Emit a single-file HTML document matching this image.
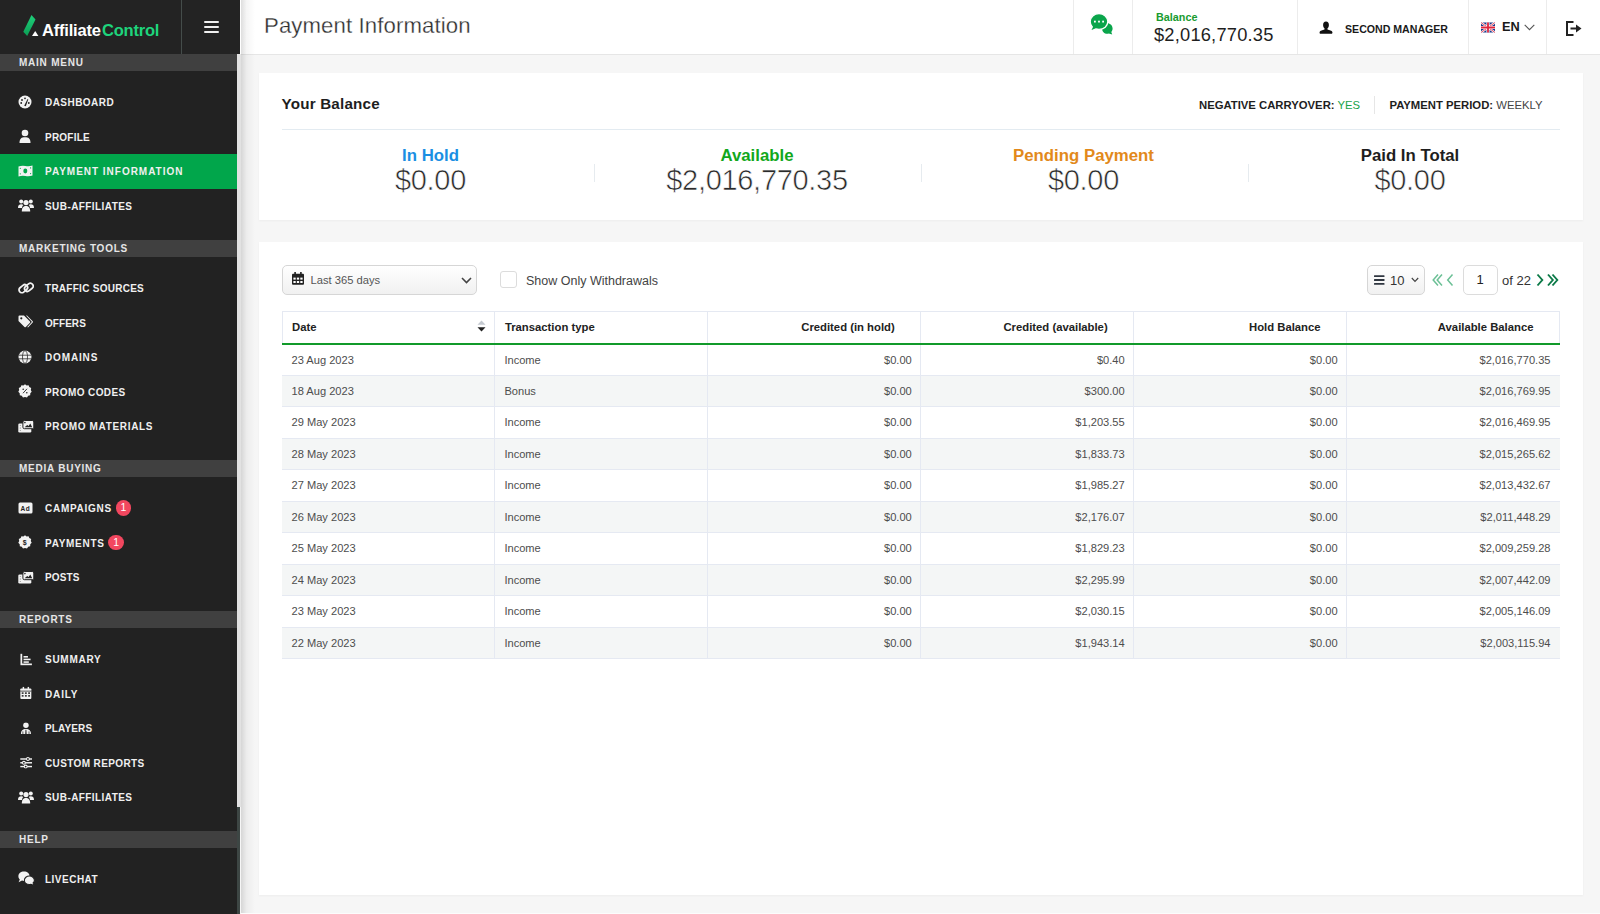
<!DOCTYPE html>
<html><head><meta charset="utf-8"><title>Payment Information</title>
<style>
*{box-sizing:border-box;margin:0;padding:0}
html,body{width:1600px;height:914px;overflow:hidden;background:#f6f6f6;font-family:"Liberation Sans",sans-serif}
#side{position:absolute;left:0;top:0;width:237px;height:914px;background:#222}
#sidehead{position:absolute;left:0;top:0;width:240px;height:54px;background:#232323}
#divider{position:absolute;left:181px;top:0;width:1px;height:54px;background:#444c4a}
.burger{position:absolute;left:204px;width:15px;height:2px;background:#f0f0f0;border-radius:1px}
#logo{position:absolute;left:23px;top:14px;width:140px;height:24px}
.logotxt{position:absolute;top:20px;font-weight:bold;font-size:16.5px;letter-spacing:-0.2px;line-height:20px}
#scroll{position:absolute;left:237px;top:54px;width:4px;height:753px;background:#e2e2e2}
#track{position:absolute;left:237px;top:807px;width:3px;height:107px;background:#3d4644}
#shadow{position:absolute;left:241px;top:0;width:14px;height:914px;background:linear-gradient(to right,rgba(0,0,0,0.13),rgba(0,0,0,0.04) 40%,rgba(0,0,0,0))}
.sbar{position:absolute;left:0;width:237px;height:17px;background:#404040;color:#e6e6e6;font-weight:bold;font-size:10px;letter-spacing:0.76px;line-height:17px;padding-left:19px}
.item{position:absolute;left:0;width:237px;height:34.5px;color:#f0f0f0;font-weight:bold;font-size:10px;letter-spacing:0.7px;line-height:34.5px}
.item.active{background:#01a64b;height:35px}
.item .ic{position:absolute;left:18px;top:0;height:34.5px;width:17px;display:flex;align-items:center}
.item .ic svg{display:block}
.item .lbl{position:absolute;left:45px;top:1.5px}
.nbadge{position:relative;display:inline-block;vertical-align:top;margin-top:8px;margin-left:3.8px;width:15.5px;height:15.5px;border-radius:50%;background:#f2475f;color:#fff;font-size:10.5px;line-height:15px;text-align:center;letter-spacing:0;font-weight:normal}
#top{position:absolute;left:240px;top:0;width:1360px;height:55px;background:#fff;border-bottom:1px solid #e6e6e6}
#title{position:absolute;left:264px;top:12px;font-size:22.2px;color:#2e2e2e;line-height:28px;letter-spacing:0.1px;-webkit-text-stroke:0.3px #fff}
.sep{position:absolute;top:0;width:1px;height:54px;background:#ececec}
.card{position:absolute;left:259px;width:1323.5px;background:#fff;box-shadow:0 1px 2px rgba(0,0,0,0.04)}
.stat{position:absolute;top:144.5px;width:326.5px;text-align:center}
.stat .lab{font-weight:bold;font-size:16.8px;line-height:22px;height:22px}
.stat .val{font-size:29px;line-height:27px;color:#2a2a2a;letter-spacing:-0.3px;-webkit-text-stroke:0.6px #fff}
.vdiv{position:absolute;top:164px;width:1px;height:18px;background:#e6ebef}
#tbl{position:absolute;left:282px;top:311px;width:1277.5px;height:347.5px;border:1px solid #e5e9f2;border-bottom:none}
.th{position:absolute;top:0;height:31px;font-weight:bold;font-size:11.3px;color:#222;line-height:30px}
.th.l{padding-left:10px}.th.r{padding-right:26px;text-align:right}
.sort{position:absolute;right:8.5px;top:7.5px}
#green{position:absolute;left:-1px;top:31px;width:1277.5px;height:2px;background:#119a2a;z-index:2}
.tr{position:absolute;left:-1px;width:1277.5px;height:31.3px;border-bottom:1px solid #e5e9f2;background:#fff}
.tr.odd{background:#f4f6f6}
.td{position:absolute;top:0;height:31px;font-size:11.1px;color:#4d4d4d;line-height:31px}
.td.l{padding-left:9.5px}.td.r{padding-right:9px;text-align:right}
.vl{position:absolute;top:0;width:1px;height:347px;background:#e5e9f2}
.btn{position:absolute;border:1px solid #d6d6d6;border-radius:5px;background:linear-gradient(#fff,#f1f1f1)}
</style></head><body>
<div id="side">
<div class="sbar" style="top:54px">MAIN MENU</div>
<div class="item" style="top:84.7px"><span class="ic" style=""><svg width="14" height="14" viewBox="0 0 14 14"><circle cx="7" cy="7" r="6.5" fill="#f2f2f2"/><circle cx="4" cy="5" r="0.9" fill="#222"/><circle cx="7" cy="3.3" r="0.9" fill="#222"/><circle cx="3.2" cy="8" r="0.9" fill="#222"/><circle cx="10.8" cy="8" r="0.9" fill="#222"/><path d="M6.2 10.8 L9.6 3.9 L10.3 4.2 L7.8 11.3 Z" fill="#222"/></svg></span><span class="lbl" style="letter-spacing:0.45px">DASHBOARD</span></div>
<div class="item" style="top:119.2px"><span class="ic" style=""><svg width="14" height="14" viewBox="0 0 14 14"><circle cx="7" cy="4" r="3.3" fill="#f2f2f2"/><path d="M1.5 14 C1.5 9.5 3.5 8.3 7 8.3 C10.5 8.3 12.5 9.5 12.5 14 Z" fill="#f2f2f2"/></svg></span><span class="lbl" style="letter-spacing:0.217px">PROFILE</span></div>
<div class="item active" style="top:153.7px"><span class="ic" style=""><svg width="15" height="12" viewBox="0 0 15 12"><path d="M0.5 1.5 Q4 0.2 7.5 1 Q11 1.8 14.5 0.5 L14.5 10.5 Q11 11.8 7.5 11 Q4 10.2 0.5 11.5 Z" fill="#f2f2f2"/><ellipse cx="7.3" cy="6" rx="2" ry="2.4" fill="#01a64b"/><circle cx="2.3" cy="3.3" r="0.6" fill="#01a64b"/><circle cx="12.6" cy="2.9" r="0.6" fill="#01a64b"/><circle cx="2.3" cy="8.8" r="0.6" fill="#01a64b"/><circle cx="12.6" cy="8.6" r="0.6" fill="#01a64b"/></svg></span><span class="lbl" style="letter-spacing:0.978px">PAYMENT INFORMATION</span></div>
<div class="item" style="top:188.2px"><span class="ic" style=""><svg width="16" height="14" viewBox="0 0 16 14"><circle cx="3.2" cy="3.6" r="2" fill="#f2f2f2"/><circle cx="12.8" cy="3.6" r="2" fill="#f2f2f2"/><circle cx="8" cy="4.6" r="2.6" fill="#f2f2f2"/><path d="M0 10 C0 7 1.5 6.3 3.2 6.3 C4.3 6.3 5 6.6 5.3 7 C4.3 7.8 4 9 4 10 Z" fill="#f2f2f2"/><path d="M16 10 C16 7 14.5 6.3 12.8 6.3 C11.7 6.3 11 6.6 10.7 7 C11.7 7.8 12 9 12 10 Z" fill="#f2f2f2"/><path d="M3.8 13.5 C3.8 9.6 5.5 8 8 8 C10.5 8 12.2 9.6 12.2 13.5 Z" fill="#f2f2f2"/></svg></span><span class="lbl" style="letter-spacing:0.423px">SUB-AFFILIATES</span></div>
<div class="sbar" style="top:240px">MARKETING TOOLS</div>
<div class="item" style="top:270.7px"><span class="ic" style=""><svg width="16" height="14" viewBox="0 0 16 14"><g fill="none" stroke="#f2f2f2" stroke-width="1.8"><rect x="0.6" y="4.9" width="9.4" height="5.6" rx="2.8" transform="rotate(-40 5.3 7.7)"/><rect x="6.2" y="3.5" width="9.4" height="5.6" rx="2.8" transform="rotate(-40 10.9 6.3)"/></g></svg></span><span class="lbl" style="letter-spacing:0.271px">TRAFFIC SOURCES</span></div>
<div class="item" style="top:305.2px"><span class="ic" style=""><svg width="15" height="14" viewBox="0 0 15 14"><path d="M0.5 1.5 Q0.5 0.5 1.5 0.5 L6 0.5 L12 6.5 Q12.6 7.2 12 7.8 L7.8 12 Q7.2 12.6 6.5 12 L0.5 6 Z" fill="#f2f2f2"/><circle cx="3.3" cy="3.3" r="1.1" fill="#222"/><path d="M8 0.5 L9 0.5 L14.7 6.3 Q15.2 7 14.7 7.6 L10 12.5 L9.3 12 L13.6 7.3 Q13.9 7 13.6 6.6 Z" fill="#f2f2f2"/></svg></span><span class="lbl" style="letter-spacing:0.05px">OFFERS</span></div>
<div class="item" style="top:339.7px"><span class="ic" style=""><svg width="14" height="15" viewBox="0 0 14 15"><circle cx="7" cy="8" r="6.5" fill="#f2f2f2"/><g stroke="#222" stroke-width="0.75" fill="none"><ellipse cx="7" cy="8" rx="2.5" ry="6.4"/><path d="M0.5 6.2 H13.5 M0.5 9.8 H13.5"/></g></svg></span><span class="lbl" style="letter-spacing:0.85px">DOMAINS</span></div>
<div class="item" style="top:374.2px"><span class="ic" style=""><svg width="14" height="14" viewBox="0 0 14 14"><path d="M7 0.3 L8.6 1.5 L10.6 1.2 L11.3 3.1 L13.2 4 L12.8 6 L13.7 7.8 L12.3 9.3 L12.2 11.3 L10.2 11.8 L9 13.5 L7 13 L5 13.5 L3.8 11.8 L1.8 11.3 L1.7 9.3 L0.3 7.8 L1.2 6 L0.8 4 L2.7 3.1 L3.4 1.2 L5.4 1.5 Z" fill="#f2f2f2"/><g stroke="#222" stroke-width="0.9"><path d="M5 9.2 L9 4.8"/></g><circle cx="5.2" cy="5.2" r="0.8" fill="#222"/><circle cx="8.8" cy="8.8" r="0.8" fill="#222"/></svg></span><span class="lbl" style="letter-spacing:0.41px">PROMO CODES</span></div>
<div class="item" style="top:408.7px"><span class="ic" style=""><svg width="16" height="14" viewBox="0 0 16 14"><rect x="0.3" y="4.5" width="13" height="9" rx="1.3" fill="#f2f2f2"/><g fill="#222"><circle cx="2.2" cy="6.6" r="0.45"/><circle cx="2.2" cy="9" r="0.45"/><circle cx="2.2" cy="11.4" r="0.45"/></g><rect x="4.9" y="1.5" width="10.9" height="8.2" rx="1.5" fill="#f2f2f2" stroke="#222" stroke-width="1"/><path d="M6.6 8.3 L9.2 5.9 L10.6 6.9 L12.3 4.6 L14.2 8.3 Z" fill="#222"/><circle cx="6.9" cy="3.6" r="0.8" fill="#222"/></svg></span><span class="lbl" style="letter-spacing:0.671px">PROMO MATERIALS</span></div>
<div class="sbar" style="top:460px">MEDIA BUYING</div>
<div class="item" style="top:490.7px"><span class="ic" style=""><svg width="15" height="12" viewBox="0 0 15 12"><rect x="0.5" y="0.5" width="14" height="11" rx="1.5" fill="#f2f2f2"/><text x="7.5" y="8.6" font-family="Liberation Sans" font-weight="bold" font-size="6.5" text-anchor="middle" fill="#222">Ad</text></svg></span><span class="lbl" style="letter-spacing:0.725px">CAMPAIGNS<span class="nbadge">1</span></span></div>
<div class="item" style="top:525.2px"><span class="ic" style=""><svg width="14" height="14" viewBox="0 0 14 14"><path d="M7 0.3 L8.6 1.5 L10.6 1.2 L11.3 3.1 L13.2 4 L12.8 6 L13.7 7.8 L12.3 9.3 L12.2 11.3 L10.2 11.8 L9 13.5 L7 13 L5 13.5 L3.8 11.8 L1.8 11.3 L1.7 9.3 L0.3 7.8 L1.2 6 L0.8 4 L2.7 3.1 L3.4 1.2 L5.4 1.5 Z" fill="#f2f2f2"/><text x="7" y="9.6" font-family="Liberation Sans" font-weight="bold" font-size="7" text-anchor="middle" fill="#222">$</text></svg></span><span class="lbl" style="letter-spacing:0.714px">PAYMENTS<span class="nbadge">1</span></span></div>
<div class="item" style="top:559.7px"><span class="ic" style=""><svg width="16" height="14" viewBox="0 0 16 14"><rect x="0.3" y="4.5" width="13" height="9" rx="1.3" fill="#f2f2f2"/><g fill="#222"><circle cx="2.2" cy="6.6" r="0.45"/><circle cx="2.2" cy="9" r="0.45"/><circle cx="2.2" cy="11.4" r="0.45"/></g><rect x="4.9" y="1.5" width="10.9" height="8.2" rx="1.5" fill="#f2f2f2" stroke="#222" stroke-width="1"/><path d="M6.6 8.3 L9.2 5.9 L10.6 6.9 L12.3 4.6 L14.2 8.3 Z" fill="#222"/><circle cx="6.9" cy="3.6" r="0.8" fill="#222"/></svg></span><span class="lbl" style="letter-spacing:0.1px">POSTS</span></div>
<div class="sbar" style="top:611px">REPORTS</div>
<div class="item" style="top:641.7px"><span class="ic" style="transform:translate(1px,0.5px) scale(0.88)"><svg width="14" height="14" viewBox="0 0 14 14"><path d="M0.5 0.5 H2.5 V11.5 H13.5 V13.5 H0.5 Z" fill="#f2f2f2"/><rect x="4" y="3" width="5" height="1.8" fill="#f2f2f2"/><rect x="4" y="6" width="8" height="1.8" fill="#f2f2f2"/><rect x="4" y="9" width="6" height="1.8" fill="#f2f2f2"/></svg></span><span class="lbl" style="letter-spacing:0.733px">SUMMARY</span></div>
<div class="item" style="top:676.2px"><span class="ic" style="transform:translate(1.2px,0px) scale(0.92)"><svg width="13" height="14" viewBox="0 0 13 14"><rect x="0.5" y="2" width="12" height="11.5" rx="1" fill="#f2f2f2"/><rect x="3" y="0.3" width="1.6" height="3" fill="#f2f2f2"/><rect x="8.4" y="0.3" width="1.6" height="3" fill="#f2f2f2"/><g fill="#222"><rect x="0.5" y="4.5" width="12" height="0.8"/><rect x="2" y="6.3" width="2" height="1.6"/><rect x="5.5" y="6.3" width="2" height="1.6"/><rect x="9" y="6.3" width="2" height="1.6"/><rect x="2" y="9.3" width="2" height="1.6"/><rect x="5.5" y="9.3" width="2" height="1.6"/><rect x="9" y="9.3" width="2" height="1.6"/></g></svg></span><span class="lbl" style="letter-spacing:0.85px">DAILY</span></div>
<div class="item" style="top:710.7px"><span class="ic" style="transform:translate(1.2px,0.3px) scale(0.88)"><svg width="13" height="14" viewBox="0 0 13 14"><circle cx="6.5" cy="3.6" r="3.1" fill="#f2f2f2"/><path d="M0.8 13.5 C0.8 9.5 2.8 7.8 6.5 7.8 C10.2 7.8 12.2 9.5 12.2 13.5 Z" fill="#f2f2f2"/><path d="M6 8.5 L7 8.5 L7.3 13.5 L5.7 13.5 Z" fill="#222"/><path d="M3 10.5 V13.5 M10 10.5 V13.5" stroke="#222" stroke-width="0.8"/></svg></span><span class="lbl" style="letter-spacing:0.133px">PLAYERS</span></div>
<div class="item" style="top:745.2px"><span class="ic" style="transform:translate(1px,0.3px) scale(0.9)"><svg width="14" height="13" viewBox="0 0 14 13"><g fill="#f2f2f2"><rect x="0.5" y="1.5" width="13" height="1.6"/><rect x="0.5" y="5.7" width="13" height="1.6"/><rect x="0.5" y="9.9" width="13" height="1.6"/></g><g fill="#222" stroke="#f2f2f2" stroke-width="1.2"><circle cx="9" cy="2.3" r="1.6"/><circle cx="4.5" cy="6.5" r="1.6"/><circle cx="6.5" cy="10.7" r="1.6"/></g></svg></span><span class="lbl" style="letter-spacing:0.385px">CUSTOM REPORTS</span></div>
<div class="item" style="top:779.7px"><span class="ic" style=""><svg width="16" height="14" viewBox="0 0 16 14"><circle cx="3.2" cy="3.6" r="2" fill="#f2f2f2"/><circle cx="12.8" cy="3.6" r="2" fill="#f2f2f2"/><circle cx="8" cy="4.6" r="2.6" fill="#f2f2f2"/><path d="M0 10 C0 7 1.5 6.3 3.2 6.3 C4.3 6.3 5 6.6 5.3 7 C4.3 7.8 4 9 4 10 Z" fill="#f2f2f2"/><path d="M16 10 C16 7 14.5 6.3 12.8 6.3 C11.7 6.3 11 6.6 10.7 7 C11.7 7.8 12 9 12 10 Z" fill="#f2f2f2"/><path d="M3.8 13.5 C3.8 9.6 5.5 8 8 8 C10.5 8 12.2 9.6 12.2 13.5 Z" fill="#f2f2f2"/></svg></span><span class="lbl" style="letter-spacing:0.423px">SUB-AFFILIATES</span></div>
<div class="sbar" style="top:831px">HELP</div>
<div class="item" style="top:861.7px"><span class="ic" style=""><svg width="17" height="15" viewBox="0 0 17 15"><path d="M6 0.5 C9.2 0.5 11.6 2.6 11.6 5.2 C11.6 7.8 9.2 9.9 6 9.9 C5.3 9.9 4.6 9.8 4 9.6 L0.6 11.2 L1.8 8.4 C0.9 7.6 0.4 6.5 0.4 5.2 C0.4 2.6 2.8 0.5 6 0.5 Z" fill="#f2f2f2"/><path d="M11.4 5 C14.2 5 16.4 6.9 16.4 9.2 C16.4 10.3 15.9 11.3 15.1 12 L16.2 14.6 L12.9 13.3 C12.4 13.4 11.9 13.5 11.4 13.5 C8.6 13.5 6.4 11.6 6.4 9.2 C6.4 6.9 8.6 5 11.4 5 Z" fill="#f2f2f2" stroke="#222" stroke-width="1.1"/></svg></span><span class="lbl" style="letter-spacing:0.486px">LIVECHAT</span></div>
</div>
<div id="sidehead">
  <svg style="position:absolute;left:23px;top:15px" width="16" height="22" viewBox="0 0 16 22"><defs><linearGradient id="lg" x1="0" y1="0" x2="0" y2="1"><stop offset="0" stop-color="#1fd07a"/><stop offset="1" stop-color="#0b9e55"/></linearGradient></defs><path d="M8.5 0 L12.5 4.5 L4.2 21 L0.3 16.7 Z" fill="url(#lg)"/><path d="M12.2 16 L15.4 21 H9 Z" fill="#fff"/></svg>
  <span class="logotxt" style="left:42px;color:#fff">Affiliate</span>
  <span class="logotxt" style="left:102px;color:#1ed47c">Control</span>
  <div id="divider"></div>
  <div class="burger" style="top:20.5px"></div>
  <div class="burger" style="top:26px"></div>
  <div class="burger" style="top:31px"></div>
</div>
<div id="scroll"></div><div id="track"></div>
<div id="top">
</div>
<div id="shadow"></div>
<div style="position:absolute;left:241px;top:913px;width:1359px;height:1px;background:#fcfcfc"></div>
<div id="title">Payment Information</div>
<div class="sep" style="left:1073px"></div>
<div class="sep" style="left:1132px"></div>
<div class="sep" style="left:1297px"></div>
<div class="sep" style="left:1468px"></div>
<div class="sep" style="left:1546px"></div>
<!-- chat icon -->
<svg style="position:absolute;left:1089px;top:13px" width="24" height="22" viewBox="0 0 24 22"><path d="M18.3 10.3 C21.3 10.3 23.6 12.6 23.6 15.5 C23.6 16.8 23.1 18 22.3 18.9 L23.2 21.6 L19.8 20.6 C19.3 20.7 18.8 20.8 18.3 20.8 C15.3 20.8 13 18.4 13 15.5 C13 12.6 15.3 10.3 18.3 10.3 Z" fill="#0aa54b"/><path d="M10 0.6 C14.9 0.6 18.8 4.2 18.8 8.6 C18.8 13 14.9 16.4 10 16.4 C8.9 16.4 7.8 16.2 6.8 15.9 L1.2 18.3 L3.3 14 C1.9 12.6 1.2 10.7 1.2 8.6 C1.2 4.2 5.1 0.6 10 0.6 Z" fill="#0aa54b" stroke="#fff" stroke-width="1.3"/><rect x="5" y="7.7" width="1.8" height="1.8" fill="#fff"/><rect x="9.1" y="7.7" width="1.8" height="1.8" fill="#fff"/><rect x="13.2" y="7.7" width="1.8" height="1.8" fill="#fff"/></svg>
<div style="position:absolute;left:1156px;top:10px;font-weight:bold;font-size:10.8px;color:#189b2f;line-height:14px">Balance</div>
<div style="position:absolute;left:1154px;top:24px;font-size:18.3px;color:#1f1f1f;line-height:22px;letter-spacing:0.2px">$2,016,770.35</div>
<svg style="position:absolute;left:1319px;top:21px" width="14" height="14" viewBox="0 0 14 14"><path d="M7 0.6 C8.9 0.6 9.9 2 9.9 4 C9.9 5.6 9.1 7 8.4 7.6 L8.5 8.6 C10.4 9.2 12.9 9.6 13.4 11 C13.6 11.8 13.2 12.8 12.6 12.8 L1.4 12.8 C0.8 12.8 0.4 11.8 0.6 11 C1.1 9.6 3.6 9.2 5.5 8.6 L5.6 7.6 C4.9 7 4.1 5.6 4.1 4 C4.1 2 5.1 0.6 7 0.6 Z" fill="#111"/></svg>
<div style="position:absolute;left:1345px;top:22px;font-weight:bold;font-size:10.6px;color:#1a1a1a;line-height:14px;letter-spacing:0px">SECOND MANAGER</div>
<svg style="position:absolute;left:1481px;top:22px" width="14" height="11" viewBox="0 0 14 11"><rect x="0" y="0.5" width="14" height="10" rx="1" fill="#1b3a8c"/><path d="M0 0.5 L14 10.5 M14 0.5 L0 10.5" stroke="#fff" stroke-width="2.2"/><path d="M0 0.5 L14 10.5 M14 0.5 L0 10.5" stroke="#e0243c" stroke-width="0.8"/><path d="M7 0.5 V10.5 M0 5.5 H14" stroke="#fff" stroke-width="3.2"/><path d="M7 0.5 V10.5 M0 5.5 H14" stroke="#e0243c" stroke-width="1.8"/></svg>
<div style="position:absolute;left:1502px;top:20px;font-weight:bold;font-size:12.8px;color:#1a1a1a;line-height:14px">EN</div>
<svg style="position:absolute;left:1524px;top:24px" width="11" height="7" viewBox="0 0 11 7"><path d="M0.7 0.8 L5.5 5.6 L10.3 0.8" fill="none" stroke="#555" stroke-width="1.1"/></svg>
<svg style="position:absolute;left:1566px;top:21px" width="16" height="15" viewBox="0 0 16 15"><path d="M7.5 1 H1 V14 H7.5" fill="none" stroke="#222" stroke-width="2"/><path d="M4.5 6.4 H10 V3.5 L15.5 7.5 L10 11.5 V8.6 H4.5 Z" fill="#222"/></svg>

<!-- card 1 -->
<div class="card" style="top:73px;height:147px"></div>
<div style="position:absolute;left:281.5px;top:95px;font-weight:bold;font-size:15.2px;color:#1e1e1e;line-height:18px;letter-spacing:0.2px">Your Balance</div>
<div style="position:absolute;left:1199px;top:98px;font-size:11.3px;line-height:15px;color:#1e1e1e;white-space:nowrap"><b>NEGATIVE CARRYOVER:</b> <span style="color:#1aa34a">YES</span></div>
<div style="position:absolute;left:1373.5px;top:95.5px;width:1px;height:18px;background:#e6e6e6"></div>
<div style="position:absolute;left:1389.5px;top:98px;font-size:11.3px;line-height:15px;color:#1e1e1e;white-space:nowrap"><b>PAYMENT PERIOD:</b> <span style="color:#444">WEEKLY</span></div>
<div style="position:absolute;left:281.5px;top:128.5px;width:1278.5px;height:1px;background:#e3ebf1"></div>
<div class="stat" style="left:267.25px"><div class="lab" style="color:#1b8fe3">In Hold</div><div class="val">$0.00</div></div>
<div class="stat" style="left:593.75px"><div class="lab" style="color:#12a81c">Available</div><div class="val">$2,016,770.35</div></div>
<div class="stat" style="left:920.25px"><div class="lab" style="color:#e2891b">Pending Payment</div><div class="val">$0.00</div></div>
<div class="stat" style="left:1246.75px"><div class="lab" style="color:#1e1e1e">Paid In Total</div><div class="val">$0.00</div></div>
<div class="vdiv" style="left:594px"></div>
<div class="vdiv" style="left:921px"></div>
<div class="vdiv" style="left:1247.5px"></div>

<!-- card 2 -->
<div class="card" style="top:242px;height:653px"></div>
<div class="btn" style="left:282px;top:265px;width:195px;height:30px"></div>
<svg style="position:absolute;left:292px;top:272px" width="12" height="13" viewBox="0 0 12 13"><rect x="0" y="1.8" width="12" height="11" rx="1" fill="#222"/><rect x="2.3" y="0" width="1.6" height="3" fill="#222"/><rect x="8.1" y="0" width="1.6" height="3" fill="#222"/><g fill="#fff"><rect x="1.4" y="5.6" width="2.3" height="2"/><rect x="4.85" y="5.6" width="2.3" height="2"/><rect x="8.3" y="5.6" width="2.3" height="2"/><rect x="1.4" y="9" width="2.3" height="2"/><rect x="4.85" y="9" width="2.3" height="2"/><rect x="8.3" y="9" width="2.3" height="2"/></g></svg>
<div style="position:absolute;left:310.5px;top:273px;font-size:11.2px;color:#555;line-height:14px">Last 365 days</div>
<svg style="position:absolute;left:461px;top:277px" width="11" height="7" viewBox="0 0 11 7"><path d="M1 1 L5.5 5.5 L10 1" fill="none" stroke="#444" stroke-width="1.6"/></svg>
<div style="position:absolute;left:500px;top:271px;width:16.5px;height:16.5px;border:1.3px solid #dcdcdc;border-radius:3px;background:#fff"></div>
<div style="position:absolute;left:526px;top:274px;font-size:12.5px;color:#444;line-height:14px">Show Only Withdrawals</div>
<div class="btn" style="left:1366.5px;top:265px;width:58px;height:30px"></div>
<svg style="position:absolute;left:1373.5px;top:275px" width="11" height="10" viewBox="0 0 11 10"><rect x="0" y="0.3" width="10.5" height="1.8" rx="0.5" fill="#2f3640"/><rect x="0" y="4.1" width="10.5" height="1.8" rx="0.5" fill="#2f3640"/><rect x="0" y="7.9" width="10.5" height="1.8" rx="0.5" fill="#2f3640"/></svg>
<div style="position:absolute;left:1390px;top:273px;font-size:13px;color:#333;line-height:15px">10</div>
<svg style="position:absolute;left:1411px;top:277px" width="8" height="6" viewBox="0 0 8 6"><path d="M0.8 1 L4 4.3 L7.2 1" fill="none" stroke="#444" stroke-width="1.2"/></svg>
<svg style="position:absolute;left:1432px;top:273px" width="22" height="14" viewBox="0 0 22 14"><g fill="none" stroke="#6cc096" stroke-width="1.5"><path d="M6 1.5 L1.2 7 L6 12.5"/><path d="M10 1.5 L5.2 7 L10 12.5"/><path d="M20.5 1.5 L15.7 7 L20.5 12.5"/></g></svg>
<div style="position:absolute;left:1462.5px;top:265px;width:35px;height:30px;border:1px solid #dcdcdc;border-radius:5px;background:#fff;text-align:center;font-size:13px;line-height:28px;color:#222">1</div>
<div style="position:absolute;left:1502px;top:273px;font-size:13px;color:#333;line-height:15px">of 22</div>
<svg style="position:absolute;left:1536px;top:273px" width="23" height="14" viewBox="0 0 23 14"><g fill="none" stroke="#0c7a48" stroke-width="1.9"><path d="M1.5 1.5 L6.3 7 L1.5 12.5"/><path d="M12 1.5 L16.8 7 L12 12.5"/><path d="M16.5 1.5 L21.3 7 L16.5 12.5"/></g></svg>

<div id="tbl">
<div class="th l" style="left:-1.00px;width:212.92px">Date<span class="sort"><svg style="display:block" width="9" height="12" viewBox="0 0 9 12"><path d="M4.5 0.5 L8.5 4.8 H0.5 Z" fill="#c4c9d0"/><path d="M4.5 11.5 L8.5 7.2 H0.5 Z" fill="#222"/></svg></span></div><div class="th l" style="left:211.92px;width:212.92px">Transaction type</div><div class="th r" style="left:424.83px;width:212.92px">Credited (in hold)</div><div class="th r" style="left:637.75px;width:212.92px">Credited (available)</div><div class="th r" style="left:850.67px;width:212.92px">Hold Balance</div><div class="th r" style="left:1063.58px;width:212.92px">Available Balance</div>
<div id="green"></div>
<div class="tr" style="top:33px;height:31px"><div class="td l" style="left:0.00px;width:212.92px;height:30px;line-height:30px">23 Aug 2023</div><div class="td l" style="left:212.92px;width:212.92px;height:30px;line-height:30px">Income</div><div class="td r" style="left:425.83px;width:212.92px;height:30px;line-height:30px">$0.00</div><div class="td r" style="left:638.75px;width:212.92px;height:30px;line-height:30px">$0.40</div><div class="td r" style="left:851.67px;width:212.92px;height:30px;line-height:30px">$0.00</div><div class="td r" style="left:1064.58px;width:212.92px;height:30px;line-height:30px">$2,016,770.35</div></div>
<div class="tr odd" style="top:64px;height:31px"><div class="td l" style="left:0.00px;width:212.92px;height:30px;line-height:30px">18 Aug 2023</div><div class="td l" style="left:212.92px;width:212.92px;height:30px;line-height:30px">Bonus</div><div class="td r" style="left:425.83px;width:212.92px;height:30px;line-height:30px">$0.00</div><div class="td r" style="left:638.75px;width:212.92px;height:30px;line-height:30px">$300.00</div><div class="td r" style="left:851.67px;width:212.92px;height:30px;line-height:30px">$0.00</div><div class="td r" style="left:1064.58px;width:212.92px;height:30px;line-height:30px">$2,016,769.95</div></div>
<div class="tr" style="top:95px;height:32px"><div class="td l" style="left:0.00px;width:212.92px;height:31px;line-height:31px">29 May 2023</div><div class="td l" style="left:212.92px;width:212.92px;height:31px;line-height:31px">Income</div><div class="td r" style="left:425.83px;width:212.92px;height:31px;line-height:31px">$0.00</div><div class="td r" style="left:638.75px;width:212.92px;height:31px;line-height:31px">$1,203.55</div><div class="td r" style="left:851.67px;width:212.92px;height:31px;line-height:31px">$0.00</div><div class="td r" style="left:1064.58px;width:212.92px;height:31px;line-height:31px">$2,016,469.95</div></div>
<div class="tr odd" style="top:127px;height:31px"><div class="td l" style="left:0.00px;width:212.92px;height:30px;line-height:30px">28 May 2023</div><div class="td l" style="left:212.92px;width:212.92px;height:30px;line-height:30px">Income</div><div class="td r" style="left:425.83px;width:212.92px;height:30px;line-height:30px">$0.00</div><div class="td r" style="left:638.75px;width:212.92px;height:30px;line-height:30px">$1,833.73</div><div class="td r" style="left:851.67px;width:212.92px;height:30px;line-height:30px">$0.00</div><div class="td r" style="left:1064.58px;width:212.92px;height:30px;line-height:30px">$2,015,265.62</div></div>
<div class="tr" style="top:158px;height:32px"><div class="td l" style="left:0.00px;width:212.92px;height:31px;line-height:31px">27 May 2023</div><div class="td l" style="left:212.92px;width:212.92px;height:31px;line-height:31px">Income</div><div class="td r" style="left:425.83px;width:212.92px;height:31px;line-height:31px">$0.00</div><div class="td r" style="left:638.75px;width:212.92px;height:31px;line-height:31px">$1,985.27</div><div class="td r" style="left:851.67px;width:212.92px;height:31px;line-height:31px">$0.00</div><div class="td r" style="left:1064.58px;width:212.92px;height:31px;line-height:31px">$2,013,432.67</div></div>
<div class="tr odd" style="top:190px;height:31px"><div class="td l" style="left:0.00px;width:212.92px;height:30px;line-height:30px">26 May 2023</div><div class="td l" style="left:212.92px;width:212.92px;height:30px;line-height:30px">Income</div><div class="td r" style="left:425.83px;width:212.92px;height:30px;line-height:30px">$0.00</div><div class="td r" style="left:638.75px;width:212.92px;height:30px;line-height:30px">$2,176.07</div><div class="td r" style="left:851.67px;width:212.92px;height:30px;line-height:30px">$0.00</div><div class="td r" style="left:1064.58px;width:212.92px;height:30px;line-height:30px">$2,011,448.29</div></div>
<div class="tr" style="top:221px;height:32px"><div class="td l" style="left:0.00px;width:212.92px;height:31px;line-height:31px">25 May 2023</div><div class="td l" style="left:212.92px;width:212.92px;height:31px;line-height:31px">Income</div><div class="td r" style="left:425.83px;width:212.92px;height:31px;line-height:31px">$0.00</div><div class="td r" style="left:638.75px;width:212.92px;height:31px;line-height:31px">$1,829.23</div><div class="td r" style="left:851.67px;width:212.92px;height:31px;line-height:31px">$0.00</div><div class="td r" style="left:1064.58px;width:212.92px;height:31px;line-height:31px">$2,009,259.28</div></div>
<div class="tr odd" style="top:253px;height:31px"><div class="td l" style="left:0.00px;width:212.92px;height:30px;line-height:30px">24 May 2023</div><div class="td l" style="left:212.92px;width:212.92px;height:30px;line-height:30px">Income</div><div class="td r" style="left:425.83px;width:212.92px;height:30px;line-height:30px">$0.00</div><div class="td r" style="left:638.75px;width:212.92px;height:30px;line-height:30px">$2,295.99</div><div class="td r" style="left:851.67px;width:212.92px;height:30px;line-height:30px">$0.00</div><div class="td r" style="left:1064.58px;width:212.92px;height:30px;line-height:30px">$2,007,442.09</div></div>
<div class="tr" style="top:284px;height:32px"><div class="td l" style="left:0.00px;width:212.92px;height:31px;line-height:31px">23 May 2023</div><div class="td l" style="left:212.92px;width:212.92px;height:31px;line-height:31px">Income</div><div class="td r" style="left:425.83px;width:212.92px;height:31px;line-height:31px">$0.00</div><div class="td r" style="left:638.75px;width:212.92px;height:31px;line-height:31px">$2,030.15</div><div class="td r" style="left:851.67px;width:212.92px;height:31px;line-height:31px">$0.00</div><div class="td r" style="left:1064.58px;width:212.92px;height:31px;line-height:31px">$2,005,146.09</div></div>
<div class="tr odd" style="top:316px;height:31px"><div class="td l" style="left:0.00px;width:212.92px;height:30px;line-height:30px">22 May 2023</div><div class="td l" style="left:212.92px;width:212.92px;height:30px;line-height:30px">Income</div><div class="td r" style="left:425.83px;width:212.92px;height:30px;line-height:30px">$0.00</div><div class="td r" style="left:638.75px;width:212.92px;height:30px;line-height:30px">$1,943.14</div><div class="td r" style="left:851.67px;width:212.92px;height:30px;line-height:30px">$0.00</div><div class="td r" style="left:1064.58px;width:212.92px;height:30px;line-height:30px">$2,003,115.94</div></div>
<div class="vl" style="left:211.42px"></div><div class="vl" style="left:424.33px"></div><div class="vl" style="left:637.25px"></div><div class="vl" style="left:850.17px"></div><div class="vl" style="left:1063.08px"></div>
</div>
</body></html>
